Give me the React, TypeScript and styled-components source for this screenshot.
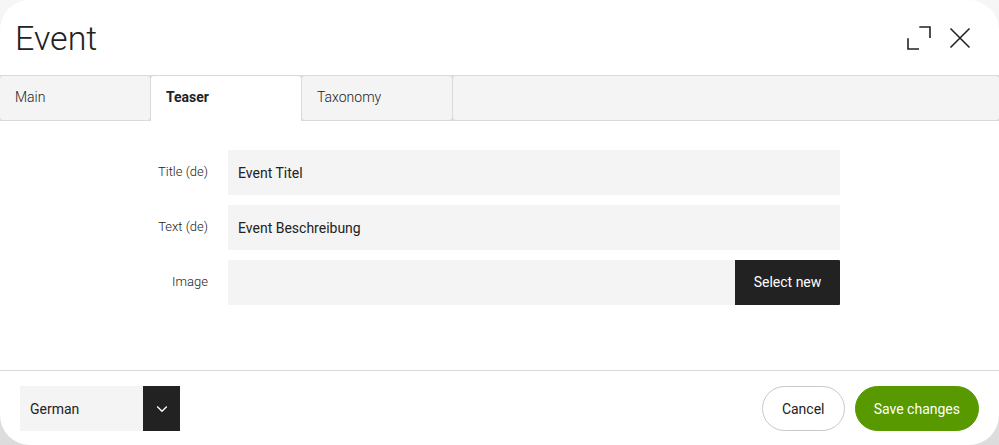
import React, { useState } from "react";
import styled, { createGlobalStyle } from "styled-components";

const ink = "#222222";
const line = "#dadada";
const panel = "#f4f4f4";

const GlobalStyle = createGlobalStyle`
  *, *::before, *::after { box-sizing: border-box; }
  body {
    margin: 0;
    background: linear-gradient(#f6f6f6, #dcdcdc);
    color: ${ink};
    font-family: Roboto, "Liberation Sans", sans-serif;
    font-size: 14px;
    line-height: 20px;
  }
  button, input, select { font: inherit; color: inherit; border-radius: 0; }
`;

const Dialog = styled.form`
  display: flex;
  flex-direction: column;
  min-height: 100vh;
  background: #ffffff;
  border-radius: 30px;
  overflow: hidden;
`;

const Header = styled.header`
  display: flex;
  align-items: center;
  justify-content: space-between;
  height: 75px;
  padding: 0 23px 0 15px;
`;

const Title = styled.h1`
  margin: 0;
  font-size: 34px;
  line-height: 40px;
  font-weight: 300;
`;

const WindowActions = styled.div`
  display: flex;
  gap: 9px;
`;

const IconButton = styled.button`
  display: grid;
  place-items: center;
  width: 32px;
  height: 32px;
  padding: 0;
  border: 0;
  background: transparent;
  cursor: pointer;
`;

const TabBar = styled.div`
  display: flex;
  gap: 1px;
  height: 46px;
  padding: 1px 0;
  background: ${line};
`;

const Tab = styled.button<{ $active: boolean }>`
  width: 150px;
  padding: 0 15px 2px;
  border: 0;
  border-radius: 3px;
  text-align: left;
  cursor: pointer;
  background: ${(p) => (p.$active ? "#ffffff" : panel)};
  font-weight: ${(p) => (p.$active ? 700 : 300)};
  ${(p) => p.$active && "border-radius: 3px 3px 0 0; margin-bottom: -1px; padding-bottom: 3px;"}
`;

const TabFiller = styled.div`
  flex: 1;
  border-radius: 3px;
  background: ${panel};
`;

const Fields = styled.div`
  display: flex;
  flex: 1;
  flex-direction: column;
  gap: 10px;
  padding: 29px 20px;
`;

const FieldRow = styled.div`
  display: grid;
  grid-template-columns: 188px minmax(0, 612px);
  column-gap: 20px;
`;

const Label = styled.label`
  padding-top: 12px;
  text-align: right;
  font-size: 13px;
  font-weight: 300;
`;

const Control = styled.div`
  display: flex;
  height: 45px;
`;

const TextInput = styled.input`
  flex: 1;
  min-width: 0;
  padding: 0 10px;
  border: 0;
  background: ${panel};
`;

const PickButton = styled.button`
  min-width: 105px;
  padding: 0 18px 2px;
  border: 0;
  border-radius: 0 1px 1px 0;
  background: ${ink};
  color: #ffffff;
  cursor: pointer;
`;

const Footer = styled.footer`
  display: flex;
  align-items: center;
  justify-content: space-between;
  height: 75px;
  padding: 0 20px;
  border-top: 1px solid ${line};
`;

const SelectBox = styled.div`
  display: grid;
  grid-template-columns: 1fr 37px;
  width: 160px;
  height: 45px;
  background: ${panel};
`;

const Select = styled.select`
  grid-area: 1 / 1 / 2 / 3;
  padding: 1px 47px 0 10px;
  border: 0;
  appearance: none;
  background: transparent;
  cursor: pointer;
`;

const SelectArrow = styled.span`
  grid-area: 1 / 2 / 2 / 3;
  display: grid;
  place-items: center;
  padding-top: 1px;
  background: ${ink};
  color: #ffffff;
  pointer-events: none;
`;

const Actions = styled.div`
  display: flex;
  gap: 10px;
`;

const PillButton = styled.button<{ $primary?: boolean }>`
  min-width: 83px;
  height: 45px;
  padding: 1px 18px 0;
  border: 1px solid ${(p) => (p.$primary ? "#589900" : "#c8c8c8")};
  border-radius: 23px;
  background: ${(p) => (p.$primary ? "#589900" : "#ffffff")};
  color: ${(p) => (p.$primary ? "#ffffff" : ink)};
  cursor: pointer;
`;

const tabs = ["Main", "Teaser", "Taxonomy"];

export default function App() {
  const [active, setActive] = useState("Teaser");

  return (
    <>
      <GlobalStyle />
      <Dialog onSubmit={(e: React.FormEvent) => e.preventDefault()}>
        <Header>
          <Title>Event</Title>
          <WindowActions>
            <IconButton type="button" aria-label="Maximize">
              <svg width="24" height="24" viewBox="0 0 24 24" fill="none" stroke="currentColor" strokeWidth="1.6">
                <path d="M12.300 1H23v11M1 12.300V23h11" />
              </svg>
            </IconButton>
            <IconButton type="button" aria-label="Close">
              <svg width="22" height="22" viewBox="0 0 22 22" fill="none" stroke="currentColor" strokeWidth="1.6">
                <path d="M1.500 1.500l19 19M20.500 1.500l-19 19" />
              </svg>
            </IconButton>
          </WindowActions>
        </Header>
        <TabBar role="tablist">
          {tabs.map((name) => (
            <Tab
              key={name}
              type="button"
              role="tab"
              aria-selected={active === name}
              $active={active === name}
              onClick={() => setActive(name)}
            >
              {name}
            </Tab>
          ))}
          <TabFiller />
        </TabBar>
        <Fields role="tabpanel">
          <FieldRow>
            <Label htmlFor="title">Title (de)</Label>
            <Control>
              <TextInput id="title" defaultValue="Event Titel" />
            </Control>
          </FieldRow>
          <FieldRow>
            <Label htmlFor="text">Text (de)</Label>
            <Control>
              <TextInput id="text" defaultValue="Event Beschreibung" />
            </Control>
          </FieldRow>
          <FieldRow>
            <Label htmlFor="image">Image</Label>
            <Control>
              <TextInput id="image" readOnly />
              <PickButton type="button">Select new</PickButton>
            </Control>
          </FieldRow>
        </Fields>
        <Footer>
          <SelectBox>
            <Select aria-label="Language" defaultValue="German">
              <option>German</option>
              <option>English</option>
            </Select>
            <SelectArrow>
              <svg width="12" height="8" viewBox="0 0 12 8" fill="none" stroke="currentColor" strokeWidth="1.300">
                <path d="M1.200 1.500L6 6.300l4.800-4.800" />
              </svg>
            </SelectArrow>
          </SelectBox>
          <Actions>
            <PillButton type="button">Cancel</PillButton>
            <PillButton type="submit" $primary>
              Save changes
            </PillButton>
          </Actions>
        </Footer>
      </Dialog>
    </>
  );
}
